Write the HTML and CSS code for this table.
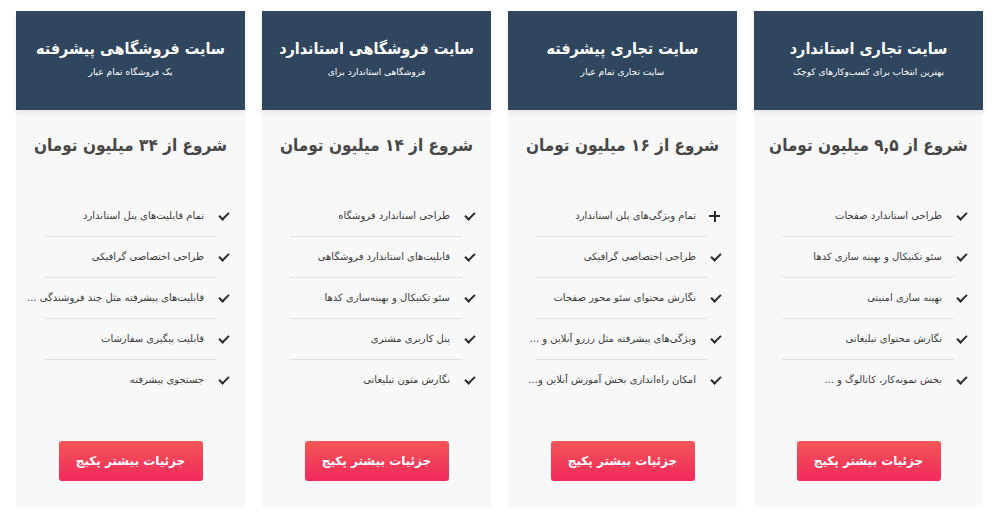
FILE: index.html
```html
<!DOCTYPE html>
<html lang="fa" dir="rtl">

<head>
  <meta charset="UTF-8" />
  <title>تعرفه طراحی سایت</title>
  <link rel="stylesheet" href="styles.css">
</head>

<body>
  <div class="plans">
    <!-- سایت تجاری استاندارد -->
    <div class="plan">
      <div class="plan-head">
        <h2>سایت تجاری استاندارد</h2>
        <p>بهترین انتخاب برای کسب‌وکارهای کوچک</p>
      </div>
      <div class="price">شروع از ۹,۵ میلیون تومان</div>
      <ul class="features">
        <li><span class="ico check"></span>طراحی استاندارد صفحات</li>
        <li><span class="ico check"></span>سئو تکنیکال و بهینه سازی کدها</li>
        <li><span class="ico check"></span>بهینه سازی امنیتی</li>
        <li><span class="ico check"></span>نگارش محتوای تبلیغاتی</li>
        <li><span class="ico check"></span>بخش نمونه‌کار، کاتالوگ و ...</li>
      </ul>
      <div class="plan-foot">
        <button class="more">جزئیات بیشتر پکیج</button>
      </div>
    </div>

    <!-- سایت تجاری پیشرفته -->
    <div class="plan">
      <div class="plan-head">
        <h2>سایت تجاری پیشرفته</h2>
        <p>سایت تجاری تمام عیار</p>
      </div>
      <div class="price">شروع از ۱۶ میلیون تومان</div>
      <ul class="features">
        <li><span class="ico plus"></span>تمام ویژگی‌های پلن استاندارد</li>
        <li><span class="ico check"></span>طراحی اختصاصی گرافیکی</li>
        <li><span class="ico check"></span>نگارش محتوای سئو محور صفحات</li>
        <li><span class="ico check"></span>ویژگی‌های پیشرفته مثل رزرو آنلاین و ...</li>
        <li><span class="ico check"></span>امکان راه‌اندازی بخش آموزش آنلاین و...</li>
      </ul>
      <div class="plan-foot">
        <button class="more">جزئیات بیشتر پکیج</button>
      </div>
    </div>

    <!-- سایت فروشگاهی استاندارد -->
    <div class="plan">
      <div class="plan-head">
        <h2>سایت فروشگاهی استاندارد</h2>
        <p>فروشگاهی استاندارد برای</p>
      </div>
      <div class="price">شروع از ۱۴ میلیون تومان</div>
      <ul class="features">
        <li><span class="ico check"></span>طراحی استاندارد فروشگاه</li>
        <li><span class="ico check"></span>قابلیت‌های استاندارد فروشگاهی</li>
        <li><span class="ico check"></span>سئو تکنیکال و بهینه‌سازی کدها</li>
        <li><span class="ico check"></span>پنل کاربری مشتری</li>
        <li><span class="ico check"></span>نگارش متون تبلیغاتی</li>
      </ul>
      <div class="plan-foot">
        <button class="more">جزئیات بیشتر پکیج</button>
      </div>
    </div>

    <!-- سایت فروشگاهی پیشرفته -->
    <div class="plan">
      <div class="plan-head">
        <h2>سایت فروشگاهی پیشرفته</h2>
        <p>یک فروشگاه تمام عیار</p>
      </div>
      <div class="price">شروع از ۳۴ میلیون تومان</div>
      <ul class="features">
        <li><span class="ico check"></span>تمام قابلیت‌های پنل استاندارد</li>
        <li><span class="ico check"></span>طراحی اختصاصی گرافیکی</li>
        <li><span class="ico check"></span>قابلیت‌های پیشرفته مثل چند فروشندگی ...</li>
        <li><span class="ico check"></span>قابلیت پیگیری سفارشات</li>
        <li><span class="ico check"></span>جستجوی پیشرفته</li>
      </ul>
      <div class="plan-foot">
        <button class="more">جزئیات بیشتر پکیج</button>
      </div>
    </div>
  </div>
</body>

</html>
```

FILE: styles.css
```css
body {
  margin: 0;
  background-color: #ffffff;
  font-family: "DejaVu Sans", sans-serif;
  color: #333333;
}

/* ردیف کارت‌ها */
.plans {
  display: flex;
  gap: 17px;
  padding: 11px 17px 0 16px;
}

.plan {
  flex: 1 1 0;
  min-width: 0;
  height: 496px;
  background-color: #f8f8f8;
  display: flex;
  flex-direction: column;
}

/* سربرگ تیره */
.plan-head {
  height: 99px;
  background-color: #30465e;
  color: #ffffff;
  text-align: center;
  box-shadow: 0 3px 6px rgba(0, 0, 0, 0.08);
  padding-top: 26px;
  box-sizing: border-box;
}

.plan-head h2 {
  margin: 0;
  font-family: "DejaVu Sans Condensed", "DejaVu Sans", sans-serif;
  font-size: 16px;
  line-height: 24px;
  font-weight: bold;
  white-space: nowrap;
}

.plan-head p {
  margin: 4px 0 0;
  font-size: 9px;
  line-height: 14px;
  white-space: nowrap;
}

.price {
  margin-top: 22px;
  text-align: center;
  font-family: "DejaVu Sans Condensed", "DejaVu Sans", sans-serif;
  font-size: 17px;
  line-height: 26px;
  font-weight: bold;
  color: #474747;
  white-space: nowrap;
}

/* لیست ویژگی‌ها */
.features {
  list-style: none;
  margin: 38px 0 0;
  padding: 0 29px 0 28px;
}

.features li {
  display: flex;
  align-items: center;
  padding: 10px 12px 10px 0;
  line-height: 20px;
  font-size: 10px;
  color: #3a3a3a;
  white-space: nowrap;
  border-bottom: 1px solid #e2e2e2;
}

.features li:last-child {
  border-bottom: none;
}

.ico {
  flex: none;
  width: 12px;
  height: 12px;
  margin-right: -25px;
  margin-left: 13px;
  position: relative;
}

/* تیک */
.check::before {
  content: "";
  position: absolute;
  left: 4px;
  top: 0;
  width: 4px;
  height: 8px;
  border: solid #2b2b2b;
  border-width: 0 2.5px 2.5px 0;
  transform: rotate(45deg);
}

/* به‌علاوه */
.plus::before,
.plus::after {
  content: "";
  position: absolute;
  background-color: #2b2b2b;
}

.plus::before {
  left: 0;
  top: 5px;
  width: 11px;
  height: 2px;
}

.plus::after {
  left: 4.5px;
  top: 0.5px;
  width: 2px;
  height: 11px;
}

.plan-foot {
  margin-top: auto;
  padding-bottom: 26px;
  display: flex;
  justify-content: center;
}

.more {
  width: 144px;
  height: 40px;
  border: none;
  border-radius: 3px;
  background: linear-gradient(#f25656, #f2295c);
  color: #ffffff;
  font-family: inherit;
  font-size: 12px;
  font-weight: bold;
  cursor: pointer;
}
```
